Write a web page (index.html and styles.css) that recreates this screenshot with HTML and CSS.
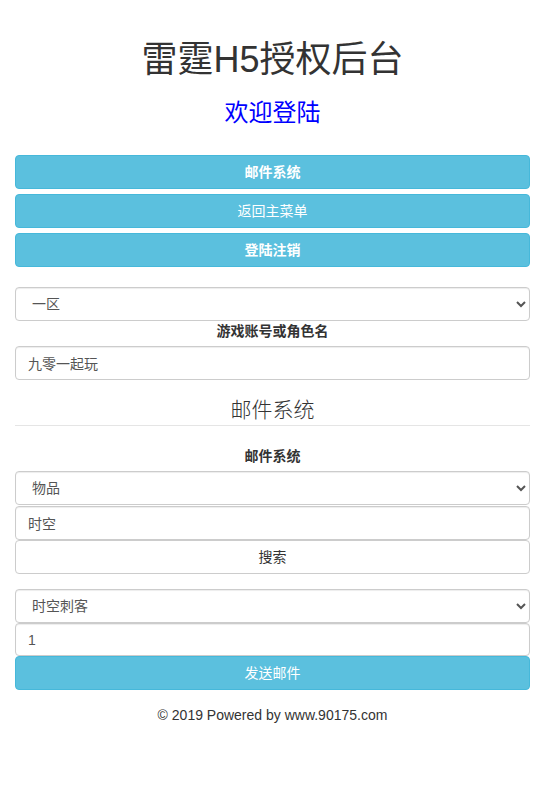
FILE: index.html
```html
<!DOCTYPE html>
<html lang="zh-CN">
<head>
<meta charset="utf-8">
<title>雷霆H5授权后台</title>
<link rel="stylesheet" href="styles.css">
</head>
<body>
<div class="container">
  <h1 class="title">雷霆H5授权后台</h1>
  <h3 class="welcome">欢迎登陆</h3>

  <div class="menu">
    <button class="btn btn-info bold">邮件系统</button>
    <button class="btn btn-info">返回主菜单</button>
    <button class="btn btn-info bold">登陆注销</button>
  </div>

  <div class="account">
    <select class="form-control">
      <option>一区</option>
    </select>
    <label class="label">游戏账号或角色名</label>
    <input class="form-control" type="text" value="九零一起玩">
  </div>

  <div class="legend">邮件系统</div>

  <label class="label">邮件系统</label>
  <div class="stack">
    <select class="form-control">
      <option>物品</option>
    </select>
    <input class="form-control gap1" type="text" value="时空">
    <button class="btn btn-default">搜索</button>
  </div>

  <div class="stack send">
    <select class="form-control">
      <option>时空刺客</option>
    </select>
    <input class="form-control short" type="text" value="1">
    <button class="btn btn-info">发送邮件</button>
  </div>

  <footer class="footer">© 2019 Powered by www.90175.com</footer>
</div>
</body>
</html>
```
FILE: styles.css
```css
* {
  box-sizing: border-box;
}

html, body {
  margin: 0;
  padding: 0;
  background: #fff;
}

body {
  font-family: "Liberation Sans", "Noto Sans CJK SC", sans-serif;
  font-size: 14px;
  line-height: 20px;
  color: #333;
}

.container {
  padding: 0 15px;
}

.title {
  margin: 40px 0 0;
  font-size: 36px;
  line-height: 40px;
  font-weight: 400;
  text-align: center;
  color: #333;
}

.welcome {
  margin: 20px 0 0;
  font-size: 24px;
  line-height: 26px;
  font-weight: 400;
  text-align: center;
  color: #0000ff;
}

.menu {
  margin-top: 29px;
  display: flex;
  flex-direction: column;
  gap: 5px;
}

.btn {
  display: block;
  width: 100%;
  height: 34px;
  margin: 0;
  padding: 6px 12px;
  font-family: inherit;
  font-size: 14px;
  line-height: 20px;
  font-weight: 400;
  text-align: center;
  border: 1px solid transparent;
  border-radius: 4px;
  cursor: pointer;
}

.btn.bold {
  font-weight: 700;
}

.btn-info {
  background: #5bc0de;
  border-color: #46b8da;
  color: #fff;
}

.btn-default {
  background: #fff;
  border-color: #ccc;
  color: #333;
}

.account {
  margin-top: 20px;
}

.form-control {
  display: block;
  width: 100%;
  height: 34px;
  margin: 0;
  padding: 6px 12px;
  font-family: inherit;
  font-size: 14px;
  line-height: 20px;
  color: #555;
  background: #fff;
  border: 1px solid #ccc;
  border-radius: 4px;
  box-shadow: inset 0 1px 1px rgba(0, 0, 0, .075);
  outline: none;
}

.form-control.short {
  height: 33px;
}

.label {
  display: block;
  margin-bottom: 5px;
  font-weight: 700;
  text-align: center;
  color: #333;
}

.legend {
  margin-top: 15px;
  margin-bottom: 20px;
  font-size: 21px;
  line-height: 30px;
  font-weight: 300;
  text-align: center;
  color: #333;
  border-bottom: 1px solid #e5e5e5;
}

.stack {
  display: flex;
  flex-direction: column;
}

.gap1 {
  margin-top: 1px;
}

.send {
  margin-top: 15px;
}

.footer {
  margin-top: 15px;
  text-align: center;
  line-height: 20px;
  color: #333;
}
```
